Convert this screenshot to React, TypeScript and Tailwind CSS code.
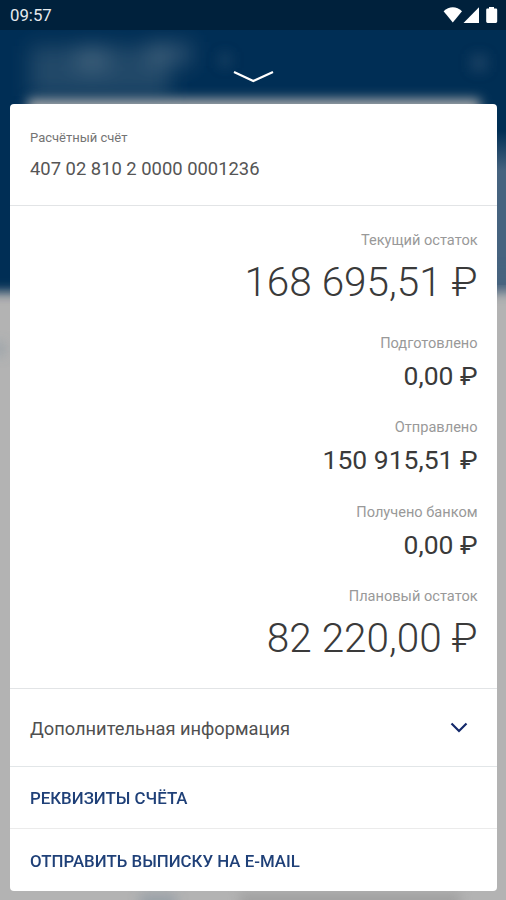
import React from 'react';

type Balance = {
  label: string;
  amount: string;
  large?: boolean;
};

const balances: Balance[] = [
  { label: 'Текущий остаток', amount: '168 695,51 ₽', large: true },
  { label: 'Подготовлено', amount: '0,00 ₽' },
  { label: 'Отправлено', amount: '150 915,51 ₽' },
  { label: 'Получено банком', amount: '0,00 ₽' },
  { label: 'Плановый остаток', amount: '82 220,00 ₽', large: true },
];

const StatusBar = () => (
  <header className="flex h-[30px] shrink-0 items-center justify-between bg-[#00213c] pl-[10px] pr-[8px] text-[#e6eaee]">
    <span className="text-[16.8px] leading-[30px]">09:57</span>
    <svg width="55" height="18" viewBox="0 0 55 18" fill="#fff">
      <path d="M0.6 5.2C6 -0.2 13.6 -0.2 19 5.2L9.8 16.5Z" />
      <path d="M20.5 17H36V1.3Z" />
      <path d="M46 1h5v1.5h2q1.2 0 1.2 1.2V15.6q0 1.4-1.4 1.4h-8.2q-1.4 0-1.4-1.4V3.7q0-1.2 1.2-1.2H46Z" />
    </svg>
  </header>
);

// Blurred account page that stays visible behind the sheet
const Backdrop = () => (
  <svg className="absolute inset-0 -z-10 bg-[#b3b3b3]" width="506" height="900" viewBox="0 0 506 900">
    <defs>
      <filter id="soft" x="-100%" y="-100%" width="300%" height="300%">
        <feGaussianBlur stdDeviation="6" />
      </filter>
      <filter id="softer" x="-100%" y="-100%" width="300%" height="300%">
        <feGaussianBlur stdDeviation="10" />
      </filter>
      <linearGradient id="fade" x1="0" y1="0" x2="0" y2="1">
        <stop offset="0" stopColor="#002e54" />
        <stop offset="0.46" stopColor="#002e54" />
        <stop offset="0.6" stopColor="#46637f" />
        <stop offset="1" stopColor="#46637f" />
      </linearGradient>
    </defs>
    <rect x="-30" y="-30" width="520" height="322" fill="#002e54" filter="url(#soft)" />
    <rect x="440" y="0" width="66" height="285" fill="url(#fade)" />
    <rect x="440" y="270" width="90" height="22" fill="#46637f" filter="url(#soft)" />
    <rect x="28" y="99" width="452" height="150" fill="#a9aaac" filter="url(#soft)" />
    <g fill="#6d8395" filter="url(#softer)">
      <rect x="30" y="46" width="140" height="50" opacity="0.3" />
      <rect x="76" y="46" width="32" height="26" opacity="0.35" />
      <rect x="148" y="42" width="44" height="24" opacity="0.35" />
    </g>
    <g fill="#6d8395" filter="url(#soft)">
      <rect x="218" y="52" width="14" height="16" opacity="0.15" />
      <rect x="470" y="54" width="18" height="18" opacity="0.2" />
      <rect x="-8" y="342" width="14" height="14" opacity="0.3" />
      <rect x="140" y="894" width="36" height="16" opacity="0.4" />
    </g>
    <rect x="240" y="893" width="220" height="16" fill="#8e8e8e" opacity="0.5" filter="url(#soft)" />
  </svg>
);

const BalanceRow = ({ label, amount, large }: Balance) => (
  <div className="flex flex-col">
    <span className="text-[14.6px] leading-[20px] text-[#999]">{label}</span>
    {large ? (
      <span className="pt-[8px] text-[40.5px] font-light leading-[49px] text-[#3a3a3a]">{amount}</span>
    ) : (
      <span className="pt-[7px] text-[26.5px] leading-[32px] text-[#3a3a3a]">{amount}</span>
    )}
  </div>
);

const App = () => {
  return (
    <div className="relative isolate flex h-[900px] w-[506px] flex-col overflow-hidden font-['Roboto',sans-serif]">
      <Backdrop />
      <StatusBar />

      <div className="flex h-[74px] shrink-0 justify-center pt-[40px]">
        <svg width="42" height="14" viewBox="0 0 42 14" fill="none" stroke="#fff" strokeWidth="2.2">
          <path d="M2 2L21.3 11L41 2" />
        </svg>
      </div>

      <main className="mx-[10px] flex h-[787px] w-[487px] flex-col rounded-[4px] bg-white">
        <section className="flex h-[102px] flex-col gap-[9px] border-b border-[#e2e4e6] pl-[20px] pt-[24px]">
          <span className="text-[13px] leading-[20px] text-[#747474]">Расчётный счёт</span>
          <span className="text-[18.4px] leading-[24px] text-[#555]">407 02 810 2 0000 0001236</span>
        </section>

        <section className="flex h-[483px] flex-col gap-[25.4px] border-b border-[#e2e4e6] pr-[19.4px] pt-[24.4px] text-right">
          {balances.map((item) => (
            <BalanceRow key={item.label} {...item} />
          ))}
        </section>

        <button className="flex h-[78px] items-center justify-between border-b border-[#e2e6e8] pl-[20px] pr-[29px] text-left">
          <span className="pt-[2px] text-[18.3px] text-[#505050]">Дополнительная информация</span>
          <svg width="18" height="12" viewBox="0 0 18 12" fill="none" stroke="#14296b" strokeWidth="2.2">
            <path d="M1.5 1.5L9 9L16.5 1.5" />
          </svg>
        </button>

        <button className="flex h-[62px] items-center border-b border-[#ebebeb] pl-[20px] pt-[2px] text-[16.85px] font-medium text-[#1f4078]">
          РЕКВИЗИТЫ СЧЁТА
        </button>
        <button className="flex h-[62px] items-center pl-[20px] pt-[3px] text-[16.85px] font-medium text-[#1f4078]">
          ОТПРАВИТЬ ВЫПИСКУ НА E-MAIL
        </button>
      </main>
    </div>
  );
};

export default App;
